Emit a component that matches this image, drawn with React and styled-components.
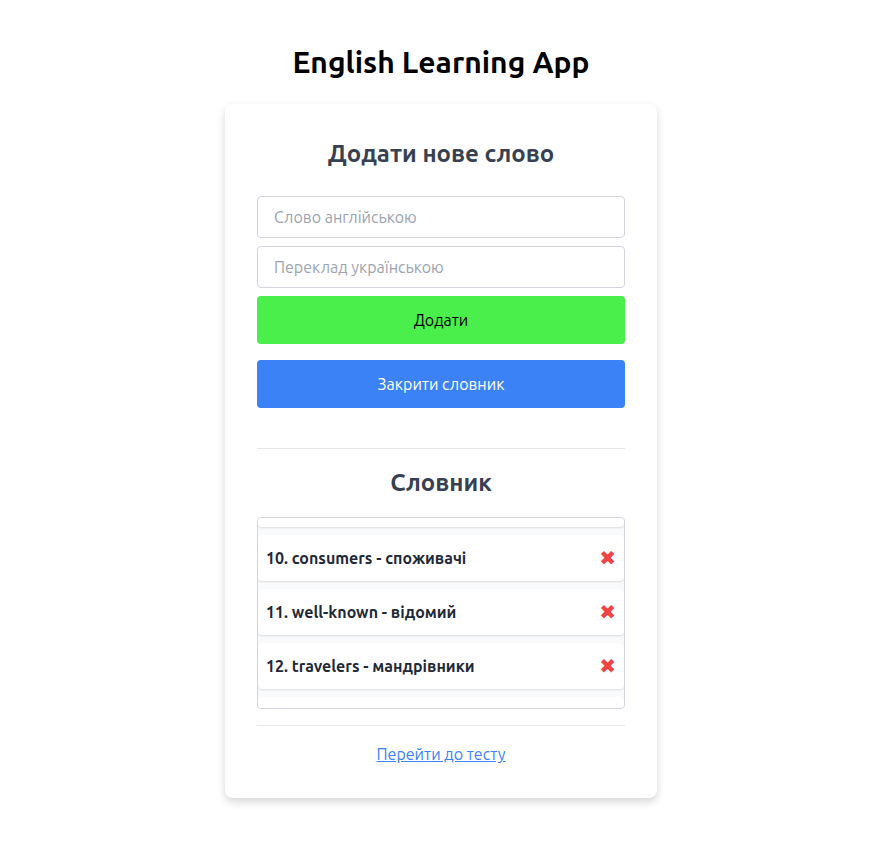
import React, { useState } from "react";
import styled, { createGlobalStyle } from "styled-components";

const GlobalStyle = createGlobalStyle`
  *, *::before, *::after { box-sizing: border-box; }
  body {
    margin: 0;
    background: #ffffff;
    color: #000000;
    font-family: Ubuntu, "Noto Sans", "DejaVu Sans", sans-serif;
    font-size: 16px;
    line-height: 24px;
  }
`;

const Page = styled.main`
  display: flex;
  flex-direction: column;
  align-items: center;
  gap: 24px;
  padding: 44px 16px;
`;

const Title = styled.h1`
  margin: 0;
  font-size: 30px;
  line-height: 36px;
  font-weight: 700;
`;

const Card = styled.section`
  width: 100%;
  max-width: 432px;
  padding: 32px;
  border-radius: 8px;
  background: #ffffff;
  box-shadow: 0 4px 8px rgba(0, 0, 0, 0.16);
`;

const Heading = styled.h2`
  margin: 0 0 ${(p) => p.$gap}px;
  color: #374151;
  font-size: 24px;
  line-height: 36px;
  font-weight: 700;
  text-align: center;
`;

const Form = styled.form`
  display: flex;
  flex-direction: column;
  gap: 8px;
  margin-bottom: 16px;
`;

const Field = styled.input`
  width: 100%;
  height: 42px;
  padding: 8px 16px;
  border: 1px solid #d1d5db;
  border-radius: 4px;
  background: #ffffff;
  color: #1f2937;
  font: inherit;

  &::placeholder {
    color: #9ca3af;
    opacity: 1;
  }
`;

const Button = styled.button`
  display: block;
  width: 100%;
  padding: 12px 16px;
  border: 0;
  border-radius: 4px;
  background: ${(p) => (p.$primary ? "#4bef4b" : "#3b82f6")};
  color: ${(p) => (p.$primary ? "#000000" : "#ffffff")};
  font: inherit;
  cursor: pointer;
`;

const Dictionary = styled.section`
  margin-top: 40px;
  padding: 16px 0;
  border-top: 1px solid #e5e7eb;
  border-bottom: 1px solid #e5e7eb;
`;

const WordList = styled.ul`
  display: flex;
  flex-direction: column;
  gap: 8px;
  margin: 0;
  padding: 0;
  border: 1px solid #d1d5db;
  border-radius: 4px;
  background: #f9fafb;
  list-style: none;
  overflow: hidden;
`;

const WordRow = styled.li`
  display: flex;
  align-items: center;
  justify-content: space-between;
  height: 46px;
  padding: 8px;
  border-radius: 4px;
  background: #ffffff;
  box-shadow: 0 1px 2px rgba(0, 0, 0, 0.12);
  color: #1f2937;
  font-weight: 700;
`;

const RowEdge = styled.li`
  height: ${(p) => (p.$top ? 9 : 11)}px;
  border-radius: ${(p) => (p.$top ? "0 0 4px 4px" : "4px 4px 0 0")};
  background: #ffffff;
  box-shadow: 0 1px 2px rgba(0, 0, 0, 0.12);
`;

const RemoveButton = styled.button`
  padding: 0;
  border: 0;
  background: none;
  color: #ef4444;
  font-family: "DejaVu Sans", sans-serif;
  font-size: 20px;
  line-height: 24px;
  cursor: pointer;
`;

const Footer = styled.footer`
  padding-top: 16px;
  text-align: center;
`;

const TestLink = styled.a`
  color: #3b82f6;
  text-decoration: underline;
`;

const initialWords = [
  { number: 10, word: "consumers", translation: "споживачі" },
  { number: 11, word: "well-known", translation: "відомий" },
  { number: 12, word: "travelers", translation: "мандрівники" },
];

export default function App() {
  const [words, setWords] = useState(initialWords);
  const remove = (number) =>
    setWords((list) => list.filter((item) => item.number !== number));

  return (
    <>
      <GlobalStyle />
      <Page>
        <Title>English Learning App</Title>
        <Card>
          <Heading $gap={24}>Додати нове слово</Heading>
          <Form onSubmit={(event) => event.preventDefault()}>
            <Field
              type="text"
              placeholder="Слово англійською"
              aria-label="Слово англійською"
            />
            <Field
              type="text"
              placeholder="Переклад українською"
              aria-label="Переклад українською"
            />
            <Button type="submit" $primary>
              Додати
            </Button>
          </Form>
          <Button type="button">Закрити словник</Button>
          <Dictionary>
            <Heading $gap={16}>Словник</Heading>
            <WordList>
              <RowEdge $top aria-hidden="true" />
              {words.map(({ number, word, translation }) => (
                <WordRow key={number}>
                  <span>
                    {number}. {word} - {translation}
                  </span>
                  <RemoveButton type="button" onClick={() => remove(number)}>
                    ✖
                  </RemoveButton>
                </WordRow>
              ))}
              <RowEdge aria-hidden="true" />
            </WordList>
          </Dictionary>
          <Footer>
            <TestLink href="#test">Перейти до тесту</TestLink>
          </Footer>
        </Card>
      </Page>
    </>
  );
}
